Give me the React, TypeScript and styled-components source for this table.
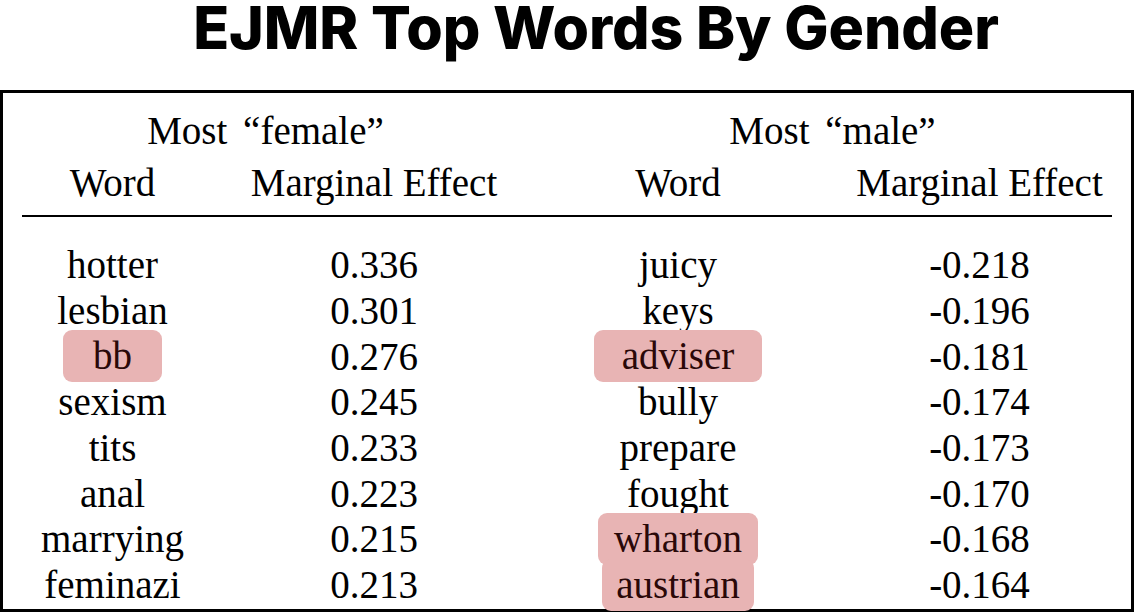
import React from "react";
import styled, { createGlobalStyle } from "styled-components";

const GlobalStyle = createGlobalStyle`
  html, body {
    margin: 0;
    padding: 0;
    background: #ffffff;
  }
`;

const Page = styled.div`
  width: 1136px;
  display: flex;
  flex-direction: column;
`;

const Title = styled.h1`
  margin: 0;
  height: 90px;
  box-sizing: border-box;
  padding: 3px 0 0 56px;
  text-align: center;
  font-family: Inter, "Liberation Sans", sans-serif;
  font-weight: 800;
  font-size: 59px;
  line-height: 50px;
  letter-spacing: -0.1px;
  color: #000;
`;

const Box = styled.div`
  width: 1134px;
  height: 522px;
  box-sizing: border-box;
  border: 3px solid #000;
  padding: 15px 0 0;
  font-family: "Liberation Serif", "Times New Roman", serif;
  font-size: 39px;
  color: #000;
`;

const Grid = styled.div<{ gap: number }>`
  display: grid;
  grid-template-columns: 219px 304px 304px 299px;
  grid-auto-rows: 45.7px;
  row-gap: ${(p) => p.gap}px;
`;

const Group = styled.div<{ shift: number }>`
  grid-column: span 2;
  display: flex;
  align-items: center;
  justify-content: center;
  padding-left: ${(p) => p.shift}px;
  word-spacing: 6px;
`;

const Cell = styled.div`
  display: flex;
  align-items: center;
  justify-content: center;
  line-height: 1;
`;

const Rule = styled.div`
  height: 1.5px;
  background: #000;
  margin: 10px 19px 25px 19px;
`;

const Pill = styled.span<{ pad: number }>`
  background: #e8b4b4;
  border-radius: 9px;
  padding: 6px ${(p) => p.pad}px 7px;
  color: #2a0808;
`;

type Row = { word: string; value: string; mark?: number };

const female: Row[] = [
  { word: "hotter", value: "0.336" },
  { word: "lesbian", value: "0.301" },
  { word: "bb", value: "0.276", mark: 30 },
  { word: "sexism", value: "0.245" },
  { word: "tits", value: "0.233" },
  { word: "anal", value: "0.223" },
  { word: "marrying", value: "0.215" },
  { word: "feminazi", value: "0.213" },
];

const male: Row[] = [
  { word: "juicy", value: "-0.218" },
  { word: "keys", value: "-0.196" },
  { word: "adviser", value: "-0.181", mark: 28 },
  { word: "bully", value: "-0.174" },
  { word: "prepare", value: "-0.173" },
  { word: "fought", value: "-0.170" },
  { word: "wharton", value: "-0.168", mark: 16 },
  { word: "austrian", value: "-0.164", mark: 14 },
];

const Word = ({ row }: { row: Row }) =>
  row.mark ? (
    <Cell>
      <Pill pad={row.mark}>{row.word}</Pill>
    </Cell>
  ) : (
    <Cell>{row.word}</Cell>
  );

export default function App() {
  return (
    <Page>
      <GlobalStyle />
      <Title>EJMR Top Words By Gender</Title>
      <Box>
        <Grid gap={6}>
          <Group shift={2}>Most “female”</Group>
          <Group shift={10}>Most “male”</Group>
          <Cell>Word</Cell>
          <Cell>Marginal Effect</Cell>
          <Cell>Word</Cell>
          <Cell>Marginal Effect</Cell>
        </Grid>
        <Rule />
        <Grid gap={0}>
          {female.map((f, i) => (
            <React.Fragment key={f.word}>
              <Word row={f} />
              <Cell>{f.value}</Cell>
              <Word row={male[i]} />
              <Cell>{male[i].value}</Cell>
            </React.Fragment>
          ))}
        </Grid>
      </Box>
    </Page>
  );
}
